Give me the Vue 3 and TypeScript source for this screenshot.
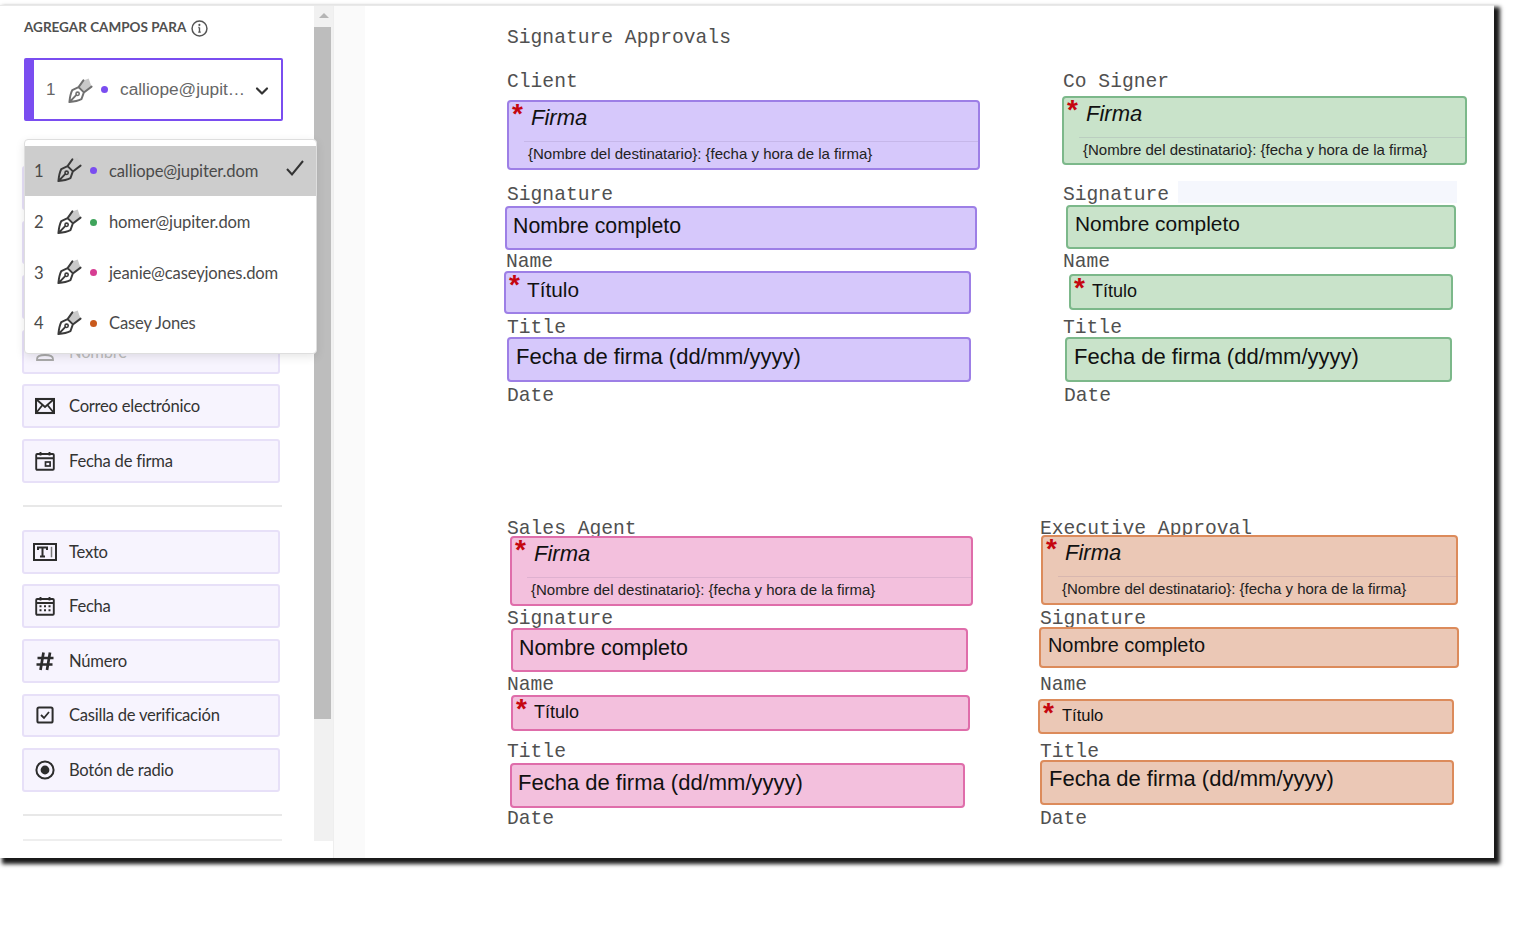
<script setup lang="ts">
interface Box { kind: 'sig' | 'text'; x: number; y: number; x2: number; y2: number; text?: string; tx?: number; cy?: number; size?: number; star?: boolean }
interface Party { tone: string; boxes: Box[] }
const ORIGIN_X = 365
const ORIGIN_Y = 6
const LINE = 26

const labels: [string, number, number][] = [
  ['Signature Approvals', 507, 37.5], ['Client', 507, 81.5], ['Signature', 507, 194.5], ['Name', 506, 261.5], ['Title', 507, 327.5], ['Date', 507, 395.5],
  ['Co Signer', 1063, 81.5], ['Signature', 1063, 194.5], ['Name', 1063, 261.5], ['Title', 1063, 327.5], ['Date', 1064, 395.5],
  ['Sales Agent', 507, 528.5], ['Signature', 507, 618.5], ['Name', 507, 684.5], ['Title', 507, 751.5], ['Date', 507, 818.5],
  ['Executive Approval', 1040, 528.5], ['Signature', 1040, 618.5], ['Name', 1040, 684.5], ['Title', 1040, 751.5], ['Date', 1040, 818.5],
]

const FULL = 'Nombre completo'
const DATE = 'Fecha de firma (dd/mm/yyyy)'
const parties: Party[] = [
  { tone: 'purple', boxes: [
    { kind: 'sig', x: 507, y: 100, x2: 980, y2: 170 },
    { kind: 'text', x: 505, y: 206, x2: 977, y2: 250, text: FULL, tx: 513, cy: 226, size: 21.3 },
    { kind: 'text', x: 504, y: 271, x2: 971, y2: 314, text: 'Título', tx: 527, cy: 290, size: 20.8, star: true },
    { kind: 'text', x: 507, y: 337, x2: 971, y2: 382, text: DATE, tx: 516, cy: 357, size: 22 },
  ] },
  { tone: 'green', boxes: [
    { kind: 'sig', x: 1062, y: 96, x2: 1467, y2: 165 },
    { kind: 'text', x: 1066, y: 205, x2: 1456, y2: 249, text: FULL, tx: 1075, cy: 224, size: 20.9 },
    { kind: 'text', x: 1069, y: 274, x2: 1453, y2: 310, text: 'Título', tx: 1092, cy: 291, size: 18, star: true },
    { kind: 'text', x: 1065, y: 337, x2: 1452, y2: 382, text: DATE, tx: 1074, cy: 357, size: 22 },
  ] },
  { tone: 'pink', boxes: [
    { kind: 'sig', x: 510, y: 536, x2: 973, y2: 606 },
    { kind: 'text', x: 511, y: 628, x2: 968, y2: 672, text: FULL, tx: 519, cy: 648, size: 21.4 },
    { kind: 'text', x: 511, y: 695, x2: 970, y2: 731, text: 'Título', tx: 534, cy: 712, size: 18, star: true },
    { kind: 'text', x: 510, y: 763, x2: 965, y2: 808, text: DATE, tx: 518, cy: 783, size: 22 },
  ] },
  { tone: 'orange', boxes: [
    { kind: 'sig', x: 1041, y: 535, x2: 1458, y2: 605 },
    { kind: 'text', x: 1039, y: 627, x2: 1459, y2: 668, text: FULL, tx: 1048, cy: 645, size: 19.9 },
    { kind: 'text', x: 1038, y: 699, x2: 1454, y2: 734, text: 'Título', tx: 1062, cy: 715, size: 16.5, star: true },
    { kind: 'text', x: 1040, y: 760, x2: 1454, y2: 805, text: DATE, tx: 1049, cy: 779, size: 22 },
  ] },
]

const labelStyle = (x: number, cy: number) => ({ left: `${x - ORIGIN_X}px`, top: `${cy - ORIGIN_Y - 9}px` })
const boxStyle = (b: Box) => ({
  left: `${b.x - ORIGIN_X}px`, top: `${b.y - ORIGIN_Y}px`, width: `${b.x2 - b.x}px`, height: `${b.y2 - b.y}px`,
})
const textStyle = (b: Box) => ({
  marginLeft: `${(b.tx ?? b.x) - b.x - 2}px`,
  paddingTop: `${(b.cy ?? b.y) - b.y - 2 - LINE / 2}px`,
  fontSize: `${b.size}px`,
})

const recipients = [
  { n: 1, dot: 'd-purple', name: 'calliope@jupiter.dom', active: true },
  { n: 2, dot: 'd-green', name: 'homer@jupiter.dom', active: false },
  { n: 3, dot: 'd-pink', name: 'jeanie@caseyjones.dom', active: false },
  { n: 4, dot: 'd-orange', name: 'Casey Jones', active: false },
]
const groupA = [
  { id: 'mail', label: 'Correo electrónico' },
  { id: 'signdate', label: 'Fecha de firma' },
]
const groupB = [
  { id: 'text', label: 'Texto' },
  { id: 'date', label: 'Fecha' },
  { id: 'hash', label: 'Número' },
  { id: 'check', label: 'Casilla de verificación' },
  { id: 'radio', label: 'Botón de radio' },
]
</script>

<template>
  <div class="page">
    <svg width="0" height="0" class="defs" aria-hidden="true">
      <symbol id="pen" viewBox="0 0 28 28">
        <path d="M17 3.5 L22.5 1.5 L25.5 10 L17.5 16 L12 10.5 Z" fill="#c9c9c9" stroke="none" />
        <path d="M2.5 26 C3 20.5 4 16.5 5.5 13.5 L12 10.5 L17 3.5 M2.5 26 C8 25.5 12 24.5 15 23 L17.5 16 L25.5 10 M12 10.5 L17.5 16 M2.5 26 L9.5 18.8" fill="none" stroke="currentColor" stroke-width="2" stroke-linejoin="round" stroke-linecap="round" />
        <circle cx="11" cy="17.4" r="1.7" fill="none" stroke="currentColor" stroke-width="1.6" />
      </symbol>
    </svg>

    <div class="window">
      <aside class="sidebar">
        <div class="panel">
          <div class="heading">
            <span>AGREGAR CAMPOS PARA</span>
            <svg class="info" viewBox="0 0 16 16" width="17" height="17">
              <circle cx="8" cy="8" r="7" fill="none" stroke="#555" stroke-width="1.4" />
              <path d="M8 7v4.2M6.8 11.4h2.4M6.9 7H8" fill="none" stroke="#555" stroke-width="1.3" />
              <circle cx="7.9" cy="4.6" r="1" fill="#555" />
            </svg>
          </div>

          <div class="picker">
            <span class="picker-n">1</span>
            <svg class="pen pen-soft"><use href="#pen" /></svg>
            <span class="dot d-purple picker-dot"></span>
            <span class="picker-name">calliope@jupit…</span>
            <svg class="chevron" viewBox="0 0 14 10" width="14" height="10">
              <path d="M2 2.5 L7 7.5 L12 2.5" fill="none" stroke="#333" stroke-width="2.2" stroke-linecap="round" stroke-linejoin="round" />
            </svg>
          </div>

          <div class="menu">
            <div v-for="r in recipients" :key="r.n" class="menu-item" :class="{ active: r.active }">
              <span class="menu-n">{{ r.n }}</span>
              <svg class="pen"><use href="#pen" /></svg>
              <span class="dot" :class="r.dot"></span>
              <span class="menu-name">{{ r.name }}</span>
              <svg v-if="r.active" class="tick" viewBox="0 0 20 18" width="20" height="18">
                <path d="M2 10 L7 15.5 L18 2" fill="none" stroke="#333" stroke-width="2" />
              </svg>
            </div>
          </div>

          <div class="rows">
            <div class="row"></div>
            <div class="row"></div>
            <div class="row"></div>
            <div class="row">
              <svg class="ico" viewBox="0 0 20 20"><path d="M2 17c0-3 3-4 8-4s8 1 8 4v1H2z" fill="none" stroke="#aaa" stroke-width="1.8" /></svg>
              <span class="dim">Nombre</span>
            </div>
            <div v-for="f in groupA" :key="f.id" class="row">
              <svg v-if="f.id === 'mail'" class="ico" viewBox="0 0 20 20">
                <rect x="1" y="3" width="18" height="14" fill="none" stroke="#2c2c2c" stroke-width="2.1" />
                <path d="M1.5 3.5 L10 11 L18.5 3.5 M1.5 16.5 L7.5 9 M18.5 16.5 L12.5 9" fill="none" stroke="#2c2c2c" stroke-width="1.8" />
              </svg>
              <svg v-else class="ico" viewBox="0 0 20 20">
                <rect x="1.2" y="3" width="17.6" height="15.8" rx="1" fill="none" stroke="#2c2c2c" stroke-width="1.9" />
                <path d="M1.5 7.2h17M5.5 1v3.5M14.5 1v3.5" fill="none" stroke="#2c2c2c" stroke-width="1.9" />
                <rect x="10.5" y="11" width="4.6" height="4" fill="none" stroke="#2c2c2c" stroke-width="1.7" />
              </svg>
              <span>{{ f.label }}</span>
            </div>
          </div>

          <div class="rule rule-a"></div>

          <div class="rows">
            <div v-for="f in groupB" :key="f.id" class="row">
              <svg v-if="f.id === 'text'" class="ico ico-wide" viewBox="0 0 24 18">
                <rect x="1" y="1" width="22" height="16" fill="none" stroke="#2c2c2c" stroke-width="2" />
                <path d="M5 7V4.5h9V7M9.5 4.5v9M7 13.5h5" fill="none" stroke="#2c2c2c" stroke-width="2" />
                <path d="M18.5 3.8v10.5" fill="none" stroke="#777" stroke-width="1.5" />
              </svg>
              <svg v-else-if="f.id === 'date'" class="ico" viewBox="0 0 20 20">
                <rect x="1.2" y="3" width="17.6" height="15.8" rx="1" fill="none" stroke="#2c2c2c" stroke-width="1.9" />
                <path d="M1.5 7h17M5.5 1v3.5M14.5 1v3.5" fill="none" stroke="#2c2c2c" stroke-width="1.9" />
                <path d="M4.5 10.2h2M9 10.2h2M13.5 10.2h2M4.5 14.2h2M9 14.2h2M13.5 14.2h2" fill="none" stroke="#2c2c2c" stroke-width="2" />
              </svg>
              <svg v-else-if="f.id === 'hash'" class="ico" viewBox="0 0 20 20">
                <path d="M8.5 1.5 L5.5 19M15 1.5 L12 19M2.5 7h16M1.5 13.5h16" fill="none" stroke="#2c2c2c" stroke-width="2.7" />
              </svg>
              <svg v-else-if="f.id === 'check'" class="ico" viewBox="0 0 20 20">
                <rect x="2.4" y="2.4" width="15.2" height="15.2" rx="1.6" fill="none" stroke="#2c2c2c" stroke-width="2" />
                <path d="M6 10 L9 13 L14 7" fill="none" stroke="#2c2c2c" stroke-width="1.8" />
              </svg>
              <svg v-else class="ico" viewBox="0 0 20 20">
                <circle cx="10" cy="10" r="8.6" fill="none" stroke="#2c2c2c" stroke-width="2" />
                <circle cx="10" cy="10" r="4.4" fill="#2c2c2c" />
              </svg>
              <span>{{ f.label }}</span>
            </div>
          </div>

          <div class="rule rule-b"></div>
          <div class="rule rule-c"></div>
        </div>

        <div class="scrollbar">
          <div class="scroll-btn"><span class="scroll-arrow"></span></div>
          <div class="scroll-thumb"></div>
        </div>
      </aside>

      <div class="gutter"></div>

      <main class="sheet">
        <span v-for="(l, i) in labels" :key="i" class="doc-label" :style="labelStyle(l[1], l[2])">{{ l[0] }}</span>
        <div class="tint"></div>
        <template v-for="p in parties" :key="p.tone">
          <div v-for="(b, j) in p.boxes" :key="j" class="box" :class="p.tone" :style="boxStyle(b)">
            <template v-if="b.kind === 'sig'">
              <span class="star">*</span>
              <div class="sig-head"><span class="sig-word">Firma</span></div>
              <div class="sig-meta">{Nombre del destinatario}: {fecha y hora de la firma}</div>
            </template>
            <template v-else>
              <span v-if="b.star" class="star">*</span>
              <div class="box-text" :style="textStyle(b)">{{ b.text }}</div>
            </template>
          </div>
        </template>
      </main>
    </div>
  </div>
</template>

<style>
html, body { margin: 0; background: #fff; }
</style>

<style scoped>
.page {
  width: 1515px;
  height: 938px;
  background: #fff;
  overflow: hidden;
  padding-top: 5px;
  box-sizing: border-box;
}
.defs { position: absolute; }
.window {
  width: 1494px;
  height: 853px;
  display: flex;
  background: #fff;
  border-top: 1px solid #e9e9e9;
  box-sizing: border-box;
  box-shadow: 4px 4px 4px 2px #1a1a1a;
  position: relative;
}
.sidebar {
  width: 334px;
  flex: none;
  display: flex;
  align-items: flex-start;
  border-right: 1px solid #eeeeee;
  box-sizing: border-box;
  background: #fff;
}
.panel {
  width: 314px;
  height: 835px;
  flex: none;
  clip-path: inset(0 -12px 0 0);
  position: relative;
  z-index: 1;
  font-family: Lato, "Noto Sans", sans-serif;
  color: #2c2c2c;
}
.heading {
  height: 44px;
  padding: 13px 0 0 24px;
  box-sizing: border-box;
  display: flex;
  align-items: flex-start;
  gap: 5px;
  font-size: 13.5px;
  line-height: 17px;
  font-weight: 700;
  color: #505050;
}
.info { margin-top: 1px; }
.picker {
  margin: 8px 0 0 24px;
  width: 259px;
  height: 63px;
  box-sizing: border-box;
  border: 2px solid #7a4df0;
  border-left-width: 10px;
  border-radius: 2px;
  display: flex;
  align-items: center;
  background: #fff;
  color: #666;
  font-family: "Liberation Sans", Arial, sans-serif;
}
.picker-n { font-size: 17px; margin-left: 12px; width: 21px; }
.pen { width: 27px; height: 27px; flex: none; color: #3a3a3a; }
.pen-soft { color: #707070; margin-top: 2px; }
.dot { width: 7px; height: 7px; border-radius: 50%; flex: none; }
.picker-dot { margin-left: 7px; }
.picker-name { font-size: 17.3px; margin-left: 12px; width: 136px; white-space: nowrap; }
.chevron { margin-left: -1px; margin-top: 3px; }
.d-purple { background: #7a4df0; }
.d-green { background: #3fa45b; }
.d-pink { background: #d63d92; }
.d-orange { background: #c9591c; }

.menu {
  position: absolute;
  left: 24px;
  top: 133px;
  width: 293px;
  height: 215px;
  box-sizing: border-box;
  padding-top: 6px;
  background: #fff;
  border: 1px solid #dedede;
  border-radius: 4px;
  box-shadow: 0 3px 10px rgba(0, 0, 0, 0.1);
  z-index: 2;
}
.menu-item {
  height: 50.7px;
  display: flex;
  align-items: center;
  color: #4a4a4a;
  font-size: 16.6px;
  letter-spacing: -0.15px;
}
.menu-item.active { height: 49.7px; margin-bottom: 1px; background: #cdcdcd; }
.menu-n { width: 22px; margin-left: 9px; }
.menu-item .pen { margin-top: -2px; }
.menu-item .dot { margin-left: 7px; }
.menu-name { margin-left: 12px; flex: 1; white-space: nowrap; }
.tick { margin-right: 11px; margin-top: -6px; }

.rows {
  margin: 0 0 0 22px;
  width: 258px;
  display: flex;
  flex-direction: column;
  gap: 10.8px;
}
.menu + .rows { margin-top: 45px; }
.row {
  height: 43.8px;
  box-sizing: border-box;
  background: #f7f4fe;
  border: 2px solid #e7e0f8;
  border-radius: 3px;
  display: flex;
  align-items: center;
  font-size: 16.6px;
  letter-spacing: -0.25px;
  color: #333;
}
.ico { width: 20px; height: 20px; flex: none; margin-left: 11px; margin-right: 14px; }
.ico-wide { width: 24px; height: 18px; margin-left: 9px; margin-right: 12px; }
.dim { color: #bdbdbd; }
.rule { margin-left: 23px; width: 259px; height: 2px; background: #e8e8e8; }
.rule-a { margin-top: 22px; margin-bottom: 23px; }
.rule-b { margin-top: 22px; }
.rule-c { margin-top: 23px; background: #eeeeee; }

.scrollbar {
  width: 19px;
  height: 835px;
  flex: none;
  background: #f1f1f1;
  display: flex;
  flex-direction: column;
}
.scroll-btn { height: 21px; display: flex; justify-content: center; padding-top: 7px; box-sizing: border-box; }
.scroll-arrow {
  width: 0;
  height: 0;
  border-left: 5px solid transparent;
  border-right: 5px solid transparent;
  border-bottom: 5px solid #b5b5b5;
}
.scroll-thumb { height: 692px; background: #bdbdbd; margin-right: 2px; }

.gutter { width: 31px; flex: none; background: #fafafa; }

.sheet { flex: 1; position: relative; background: #fff; overflow: hidden; }
.doc-label {
  position: absolute;
  font-family: "Liberation Mono", "Courier New", monospace;
  font-size: 19.65px;
  line-height: 18px;
  color: #505050;
  white-space: nowrap;
}
.tint { position: absolute; left: 813px; top: 175px; width: 279px; height: 22px; background: #f5f7fd; }
.box {
  position: absolute;
  box-sizing: border-box;
  border: 2px solid;
  border-radius: 4px;
  font-family: "Liberation Sans", Arial, sans-serif;
  color: #111;
}
.purple { background: #d6c8fb; border-color: #9d7fe6; }
.green { background: #c9e3ca; border-color: #7cb88a; }
.pink { background: #f3c0dd; border-color: #df6daa; }
.orange { background: #ebc8b6; border-color: #dc8b5b; }
.star {
  position: absolute;
  left: 3px;
  top: 0;
  font-size: 28px;
  font-weight: 700;
  line-height: 24px;
  color: #c5060f;
}
.sig-head {
  height: 40px;
  margin-left: 15px;
  padding: 3px 0 0 7px;
  box-sizing: border-box;
  border-bottom: 1px solid rgba(120, 100, 140, 0.16);
}
.sig-word { font-size: 22px; line-height: 26px; font-style: italic; }
.sig-meta { padding: 3px 0 0 19px; font-size: 15px; line-height: 18px; white-space: nowrap; color: #222; }
.box-text { line-height: 26px; white-space: nowrap; }
</style>
